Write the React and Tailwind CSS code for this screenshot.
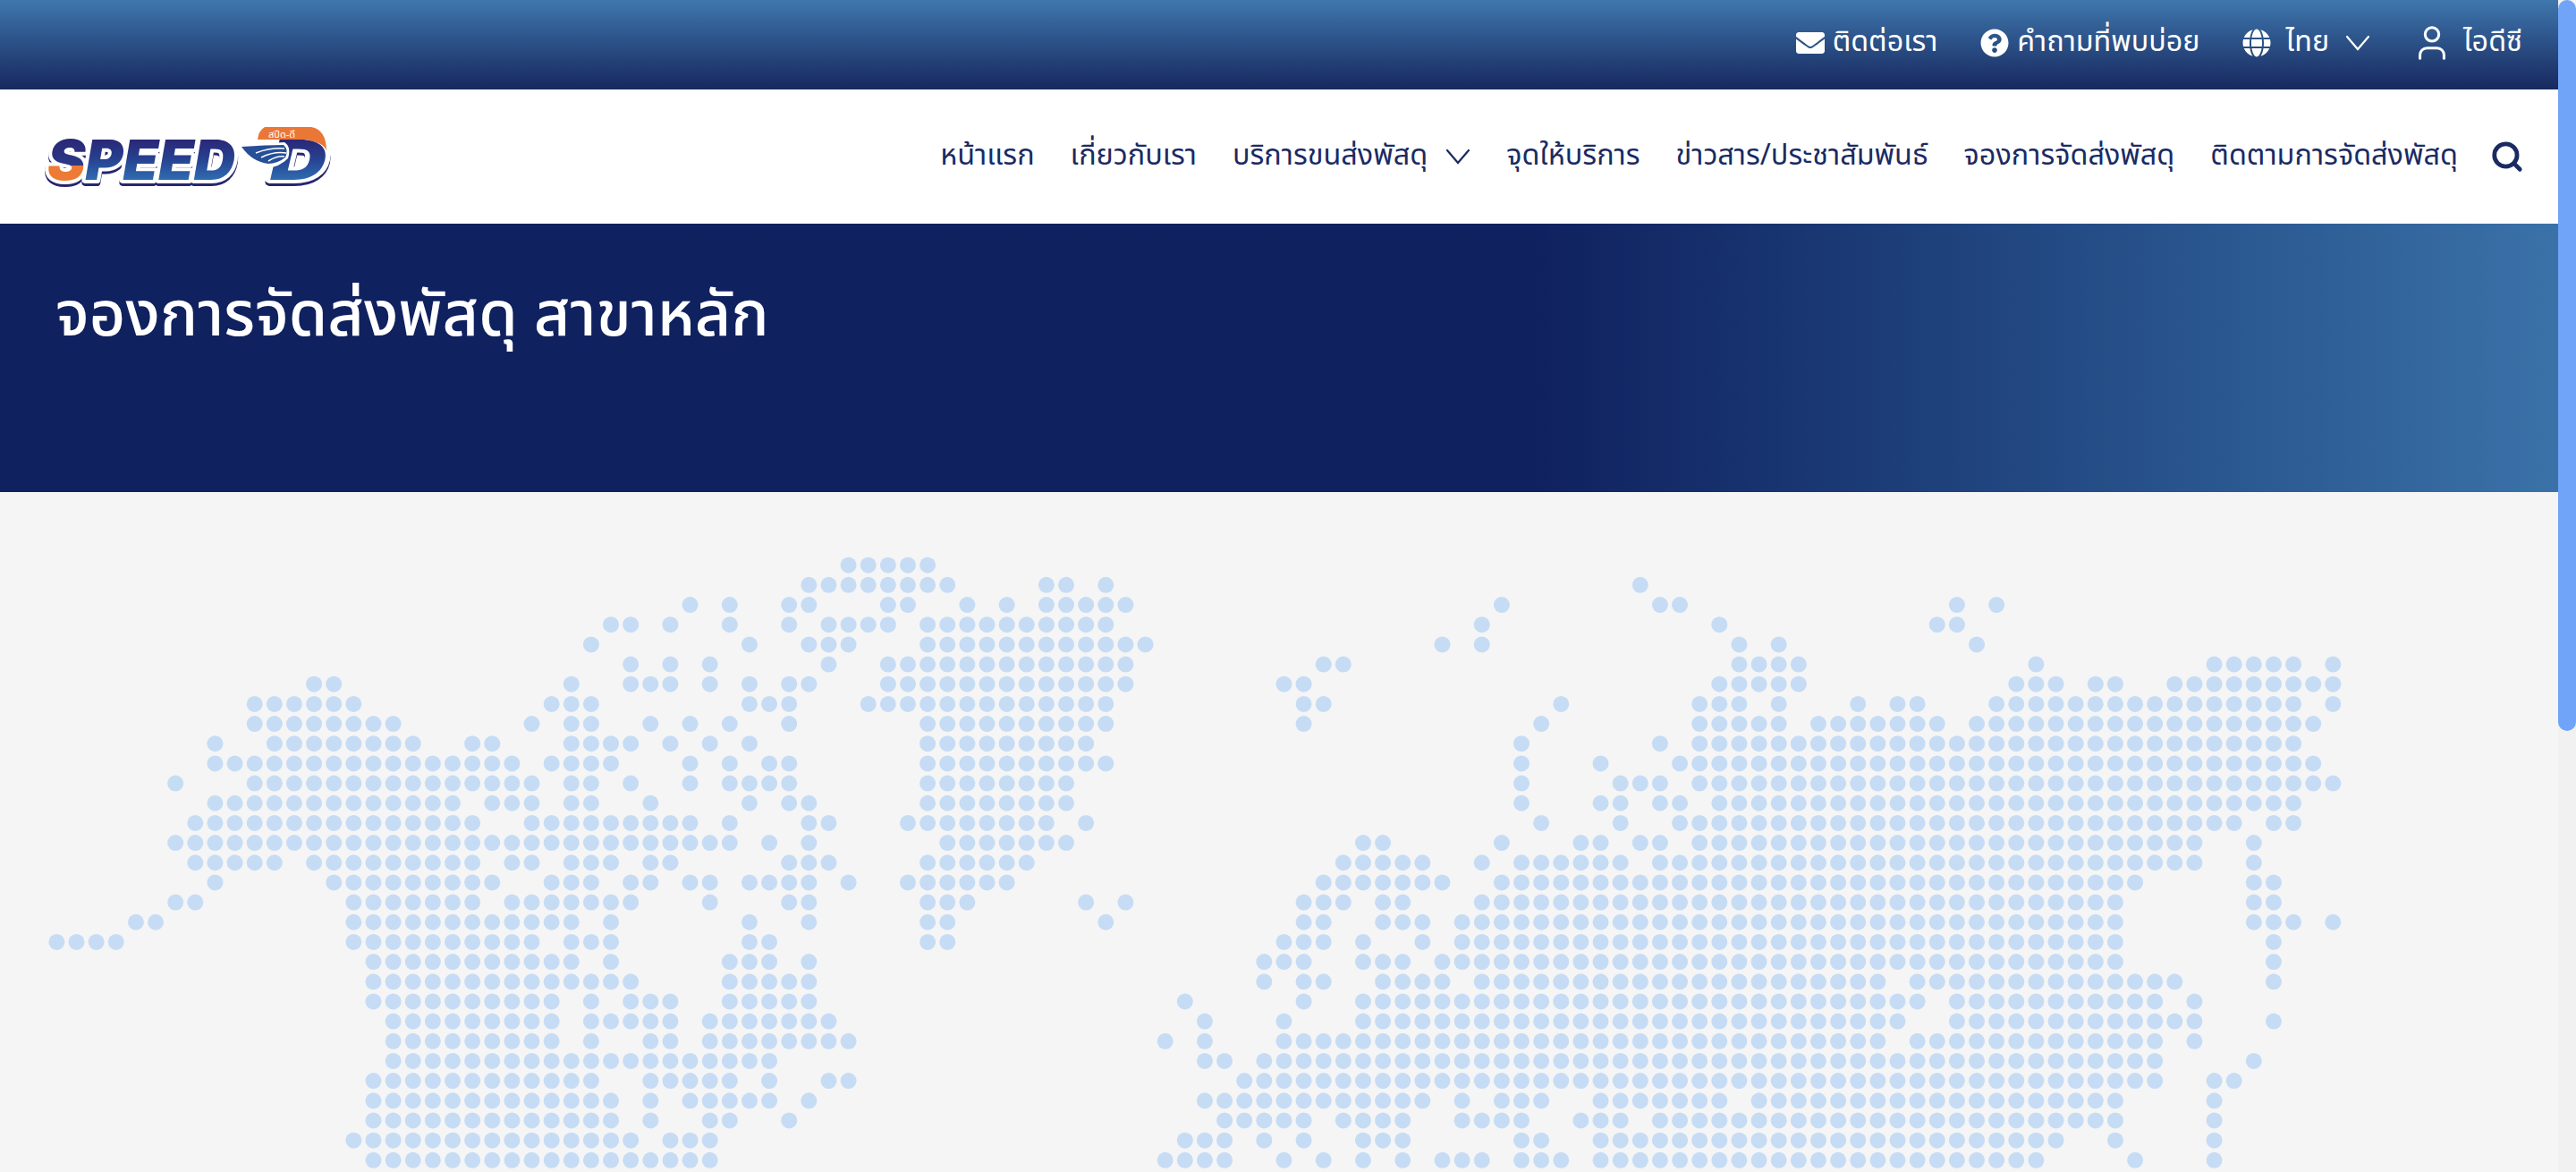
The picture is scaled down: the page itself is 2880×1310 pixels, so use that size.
import React from "react";
import { User, Search } from "lucide-react";
import { FaEnvelope, FaQuestionCircle, FaGlobe } from "react-icons/fa";

const rows = [
  "40-44",
  "38-45 50-51 53 80",
  "32 34 37-38 42-43 46 48 50-54 73 81-82 96 98",
  "28-29 31 34 37 39-42 44-53 72 84 95-96",
  "27 35 38-40 44-55 70 72 85 87 97",
  "29 31 33 39 42-54 64-65 85-88 100 109-113 115",
  "13-14 26 29-31 33 35 37-38 42-54 62-63 84-88 99-101 103-104 107-115",
  "10-15 25-27 35-37 41-53 63-64 76 83-85 87 91 93-94 98-113 115",
  "10-17 24 26-27 30 32 34 37 44-53 63 75 83-87 89-95 97-114",
  "8 11-18 21-22 26-29 31 33 35 44-52 74 81 83-113",
  "8-23 25-28 32 34 36-37 44-53 74 78 82-114",
  "6 10-24 26-27 29 32 34-37 44-51 74 79-81 83-115",
  "8-20 22-24 26-27 30 35 37-38 44-51 74 78-79 81-82 84-113",
  "7-21 24-32 34 38-39 43-50 52 75 79 82-110 112-113",
  "6-34 36 38 45-51 66-67 73 77-78 80-81 83-108 111",
  "7-11 13-21 23-24 26-28 30-31 37-39 44-49 65-69 72 74-79 81-108 111",
  "8 14-22 25-27 29-30 32-33 35-38 40 43-48 64-70 73-105 111-112",
  "6-7 15-21 23-29 33 37-38 44-46 52 54 63-65 67-68 72-104 111-112",
  "4-5 15-26 28 35 38 44-45 53 63-64 67-69 71-104 111-113 115",
  "0-3 15-24 26-28 35-36 44-45 62-64 66 69 71-104 112",
  "16-26 28 34-36 38 61-63 66-68 70-104 112",
  "16-29 34-38 61 63-64 67-70 72-92 94-107 112",
  "16-25 27 29-31 34-38 57 63 66-94 96-106 108",
  "17-25 27-31 33-39 58 62 66-93 96-108 112",
  "17-25 27 30-31 33-40 56 58 62-92 94-106 108",
  "17-36 58-59 61-106 111",
  "16-27 30-34 36 39-40 60-106 109-110",
  "16-28 30 32-36 38 58-69 71 73-75 78-84 86-104 109",
  "16-28 30 33-34 37 59-63 65-68 71-74 77-79 81-104 109",
  "15-29 31-33 57-59 61 63 66-68 74-75 78-101 104 109",
  "16-33 56-59 62 64 66 68 70-72 74-76 78-100 105 109",
];

const dots = rows.flatMap((row, r) =>
  row.split(" ").flatMap((part) => {
    const [a, b] = part.split("-").map(Number);
    const end = b === undefined ? a : b;
    const out = [];
    for (let c = a; c <= end; c++) out.push([c, r]);
    return out;
  })
);

function WorldMap() {
  return (
    <svg width="2860" height="760" viewBox="0 550 2860 760" className="block">
      {dots.map(([c, r]) => (
        <circle key={c + "-" + r} cx={63.4 + 22.13 * c} cy={631.7 + 22.17 * r} r="9" fill="#c6dcf5" />
      ))}
    </svg>
  );
}

function Logo() {
  const f = "font-['Inter'] font-black italic [paint-order:stroke] drop-shadow-[0_3px_0_#26266f]";
  return (
    <svg width="330" height="100" viewBox="0 -10 330 100" className="block shrink-0 overflow-visible">
      <defs>
        <linearGradient id="lg" gradientUnits="userSpaceOnUse" x1="0" y1="22" x2="0" y2="66">
          <stop offset="0" stopColor="#2a2878" />
          <stop offset="0.45" stopColor="#26408f" />
          <stop offset="1" stopColor="#2f6cb1" />
        </linearGradient>
        <linearGradient id="ls" gradientUnits="userSpaceOnUse" x1="0" y1="22" x2="0" y2="66">
          <stop offset="0" stopColor="#2a2878" />
          <stop offset="0.64" stopColor="#2b3a88" />
          <stop offset="0.64" stopColor="#ed7a35" />
          <stop offset="1" stopColor="#ed7a35" />
        </linearGradient>
      </defs>
      <text x="3" y="66" fontSize="62" textLength="210" lengthAdjust="spacingAndGlyphs" className={f} fill="url(#lg)" stroke="#ffffff" strokeWidth="8" strokeLinejoin="round">
        <tspan fill="url(#ls)">S</tspan>PEED
      </text>
      <text x="252" y="66" fontSize="62" textLength="63" lengthAdjust="spacingAndGlyphs" className={f} fill="url(#lg)" stroke="#ffffff" strokeWidth="8" strokeLinejoin="round">D</text>
      <path d="M246 7 H298 Q315 10 315 34 Q313 24 290 21 H238 Q239 11 246 7 Z" fill="#ea7736" />
      <path d="M217 28 Q248 25 268 24 Q276 29 272 42 Q262 52 250 52 Q230 48 217 28 Z" fill="#ffffff" />
      <path d="M220 29 Q248 27 267 27 Q273 32 269 41 Q260 48 250 48 Q232 46 220 29 Z" fill="#264f99" />
      <path d="M236 36 Q252 30 268 31 M242 41 Q256 34 270 36 M250 45 Q260 39 268 40" fill="none" stroke="#ffffff" strokeWidth="1.5" />
      <text x="250" y="19" fontSize="11" fill="#ffffff" className="font-['Noto_Sans_Thai']">สปีด-ดี</text>
    </svg>
  );
}

function Chevron({ className }) {
  return (
    <svg viewBox="0 0 28 18" fill="none" stroke="currentColor" strokeWidth="2.2" strokeLinecap="round" className={className}>
      <path d="M2 2 L14 16 L26 2" />
    </svg>
  );
}

export default function App() {
  return (
    <div className="flex w-full h-[1310px] overflow-hidden font-['Noto_Sans_Thai','Noto_Sans',sans-serif]">
      <div className="flex-1 min-w-0 flex flex-col">
        <header className="h-[100px] shrink-0 flex items-center justify-end pr-[40px] pb-[4px] text-white text-[32.3px] bg-gradient-to-b from-[#3f77ad] to-[#18295f]">
          <div className="flex items-center gap-[9px] mr-[48px]">
            <FaEnvelope className="w-[32px] h-[32px]" />
            <span>ติดต่อเรา</span>
          </div>
          <div className="flex items-center gap-[9px] mr-[48px]">
            <FaQuestionCircle className="w-[32px] h-[32px]" />
            <span>คำถามที่พบบ่อย</span>
          </div>
          <div className="flex items-center mr-[46px]">
            <FaGlobe className="w-[32px] h-[32px] mr-[16px]" />
            <span>ไทย</span>
            <Chevron className="w-[28px] h-[18px] ml-[18px]" />
          </div>
          <div className="flex items-center gap-[12px]">
            <User className="w-[46px] h-[46px]" strokeWidth={1.6} />
            <span>ไอดีซี</span>
          </div>
        </header>
        <nav className="h-[150px] shrink-0 bg-white flex items-center pl-[50px] pr-[38px] text-[#1a2b63] text-[32.4px]">
          <Logo />
          <div className="flex-1 flex items-center justify-end gap-[40px]">
            <span>หน้าแรก</span>
            <span>เกี่ยวกับเรา</span>
            <span className="flex items-center gap-[20px]">
              บริการขนส่งพัสดุ
              <Chevron className="w-[28px] h-[18px]" />
            </span>
            <span>จุดให้บริการ</span>
            <span>ข่าวสาร/ประชาสัมพันธ์</span>
            <span>จองการจัดส่งพัสดุ</span>
            <span>ติดตามการจัดส่งพัสดุ</span>
            <Search className="w-[38px] h-[38px] -ml-[4px]" strokeWidth={3} />
          </div>
        </nav>
        <section className="h-[300px] shrink-0 pl-[62px] pt-[54px] text-white text-[70px] leading-[100px] font-medium bg-gradient-to-r from-[#10215f] from-[60%] to-[#3a72a8]">
          <h1>จองการจัดส่งพัสดุ สาขาหลัก</h1>
        </section>
        <main className="flex-1 min-h-0 bg-[#f5f5f5] overflow-hidden">
          <WorldMap />
        </main>
      </div>
      <aside className="w-[20px] shrink-0 h-full bg-[#f1f1f1]">
        <div className="w-full h-[817px] rounded-[10px] bg-[#70a4f8]" />
      </aside>
    </div>
  );
}
